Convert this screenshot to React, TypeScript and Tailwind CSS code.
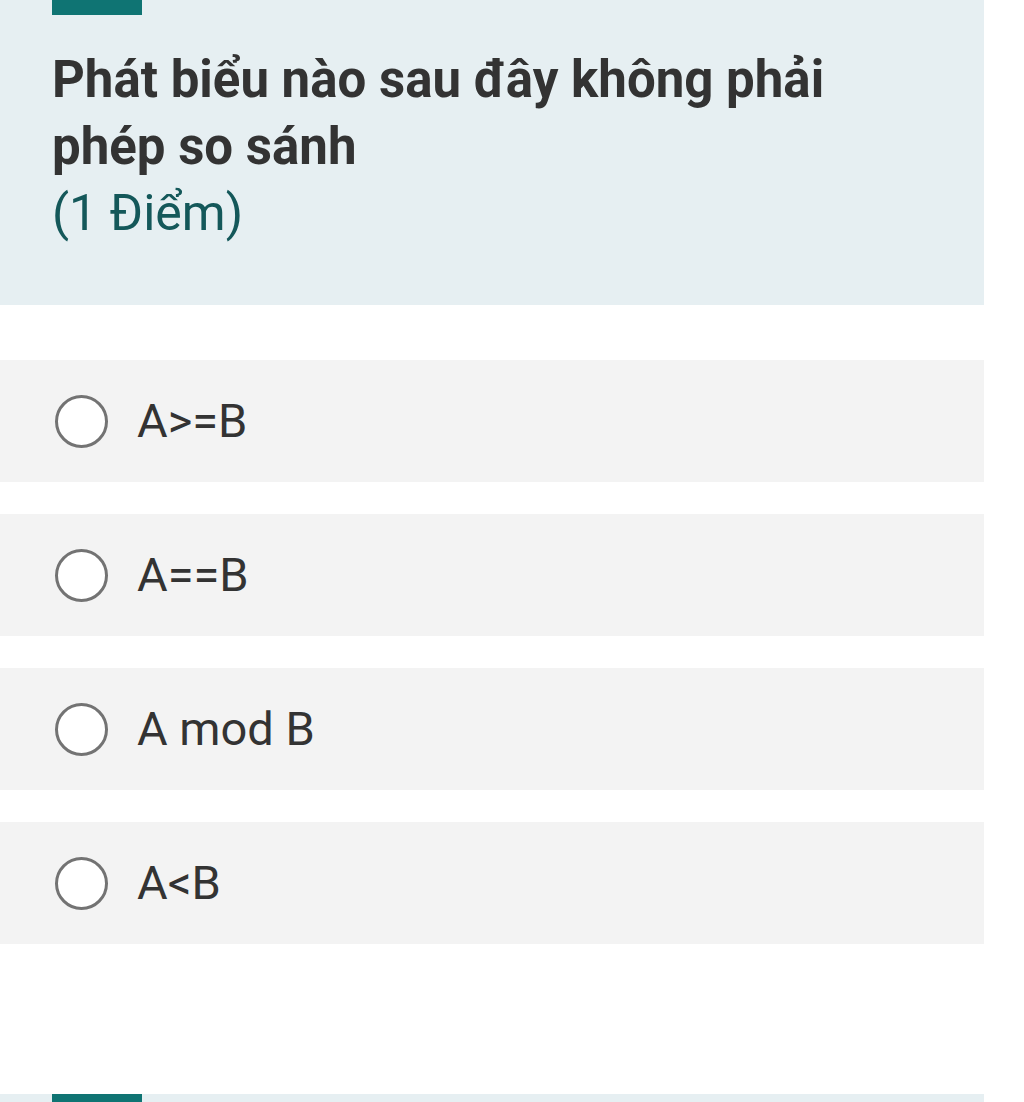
import React from "react";

const options = ["A>=B", "A==B", "A mod B", "A<B"];

function Radio() {
    return (
        <span className="block w-[53px] h-[53px] rounded-full border-[3px] border-[#737373] bg-white shrink-0" />
    );
}

export default function App() {
    return (
        <div className="w-[1024px] h-[1102px] bg-white overflow-hidden" style={{ fontFamily: "Roboto, 'Noto Sans', sans-serif" }}>
            <div className="w-[984px]">
                <div className="bg-[#e6eff2] h-[305px] px-[52px]">
                    <div className="w-[90px] h-[15px] bg-[#0f7473]" />
                    <h1 className="mt-[31px] text-[51px] leading-[67px] font-bold text-[#333333] pr-[60px]">
                        Phát biểu nào sau đây không phải phép so sánh
                    </h1>
                    <p className="text-[50px] leading-[67px] text-[#14585a]">(1 Điểm)</p>
                </div>

                <div className="mt-[55px] flex flex-col gap-[32px]">
                    {options.map((opt) => (
                        <div key={opt} className="h-[122px] bg-[#f3f3f3] flex items-center pl-[55px] gap-[29px]">
                            <Radio />
                            <span className="text-[47px] text-[#333333]">{opt}</span>
                        </div>
                    ))}
                </div>

                <div className="mt-[150px] bg-[#e6eff2] h-[20px] px-[52px]">
                    <div className="w-[90px] h-[20px] bg-[#0f7473]" />
                </div>
            </div>
        </div>
    );
}
